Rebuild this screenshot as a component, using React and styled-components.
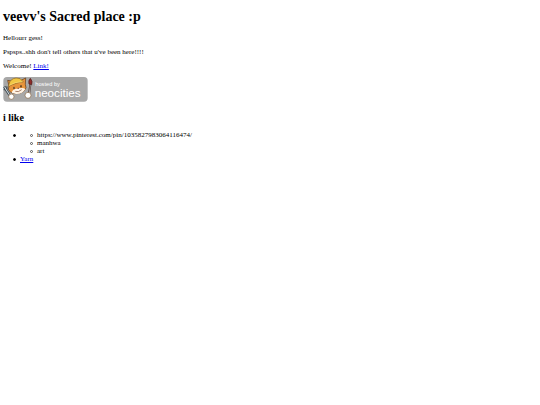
import React from 'react';
import styled, { createGlobalStyle } from 'styled-components';

const GlobalStyle = createGlobalStyle`
  body {
    margin: 0;
    background-color: #fff;
    color: #000;
    font-family: 'Liberation Serif', 'Times New Roman', serif;
    font-size: 7px;
    line-height: 8px;
  }
`;

const Page = styled.main`
  display: flow-root;
  padding: 0 3px;
`;

const Title = styled.h1`
  margin: 9px 0;
  font-size: 14px;
  line-height: 16px;
`;

const Subtitle = styled.h2`
  margin: 10px 0 8px;
  font-size: 10px;
  line-height: 11px;
`;

const Text = styled.p`
  margin: 6px 0;
`;

const Link = styled.a`
  color: #0000ee;
  text-decoration: underline;
`;

const BadgeLink = styled.a`
  display: block;
  width: fit-content;
  margin-top: 7px;
`;

const BadgeImage = styled.svg`
  display: block;
  width: 85px;
  height: 25px;
`;

const List = styled.ul`
  margin: 0;
  padding-left: 10px;
  list-style: none;
`;

const Item = styled.li`
  display: flex;
  align-items: flex-start;
  gap: 4px;

  &::before {
    content: '';
    box-sizing: border-box;
    flex: none;
    width: 3px;
    height: 3px;
    margin-top: 3px;
    border: 1px solid ${({ $hollow }) => ($hollow ? '#555' : '#000')};
    border-radius: 50%;
    background-color: ${({ $hollow }) => ($hollow ? 'transparent' : '#000')};
  }
`;

const likes = ['https://www.pinterest.com/pin/1035827983064116474/', 'manhwa', 'art'];

const NeocitiesBadge = () => (
  <BadgeImage viewBox="9 14 255 75" role="img" aria-label="Hosted by Neocities">
    <rect x="10" y="14" width="253" height="74" rx="11" fill="#a8a8a8" />
    {/* wrench */}
    <path d="M13 43 L18 52 L30 70" fill="none" stroke="#46525a" strokeWidth="8" />
    <path d="M21 42 L20 52 L11 52" fill="none" stroke="#46525a" strokeWidth="4" />
    <path d="M14 44 L19 53 L30 70" fill="none" stroke="#dce2e4" strokeWidth="3" />
    {/* head */}
    <path
      d="M27 42 L23 24 L39 27 Q50 19 63 24 L77 17 L76 36 Q82 47 72 56 Q61 67 45 64 Q28 61 25 50 Z"
      fill="#e8953c"
      stroke="#5b3515"
      strokeWidth="2"
    />
    <path d="M35 61 Q37 51 49 49 L58 48 Q70 46 76 50 Q68 66 48 65 Z" fill="#fff3e4" />
    {/* cap */}
    <path d="M27 35 Q31 19 48 17 Q62 15 70 29 Q57 30 49 33 Q37 36 25 43 Z" fill="#f1c744" stroke="#8b6224" strokeWidth="2" />
    <path d="M28 39 Q45 28 68 28" fill="none" stroke="#fae07b" strokeWidth="2" />
    <ellipse cx="42" cy="47" rx="2" ry="4" fill="#43301e" />
    <ellipse cx="63" cy="42" rx="2" ry="4" fill="#43301e" />
    <path d="M51 47 L58 46 L55 50 Z" fill="#6b3029" />
    <path d="M46 57 Q55 61 65 52" fill="none" stroke="#80472c" strokeWidth="2" />
    {/* brush */}
    <path d="M91 36 L87 66" stroke="#44302c" strokeWidth="6" />
    <path d="M91 37 L88 62" stroke="#d8d0ca" strokeWidth="2" />
    <path d="M87 35 Q84 25 91 18 Q99 27 95 37 Z" fill="#8f2b27" stroke="#4b2020" strokeWidth="2" />
    {/* hands */}
    <circle cx="34" cy="73" r="8" fill="#fff" stroke="#8a6844" strokeWidth="2" />
    <circle cx="84" cy="69" r="9" fill="#fff" stroke="#8a6844" strokeWidth="2" />
    <g fill="#fff" fontFamily="'Liberation Sans', Arial, sans-serif">
      <text x="106" y="41" fontSize="17">hosted by</text>
      <text x="104" y="74" fontSize="35">neocities</text>
    </g>
  </BadgeImage>
);

const App = () => {
  return (
    <>
      <GlobalStyle />
      <Page>
        <Title>veevv's Sacred place :p</Title>
        <Text>Hellourr gess!</Text>
        <Text>Pspsps..shh don't tell others that u've been here!!!!</Text>
        <Text>
          Welcome! <Link href="#link">Link!</Link>
        </Text>
        <BadgeLink href="#neocities">
          <NeocitiesBadge />
        </BadgeLink>
        <Subtitle>i like</Subtitle>
        <List>
          <Item>
            <List>
              {likes.map((like) => (
                <Item key={like} $hollow>
                  {like}
                </Item>
              ))}
            </List>
          </Item>
          <Item>
            <Link href="#yarn">Yarn</Link>
          </Item>
        </List>
      </Page>
    </>
  );
};

export default App;
